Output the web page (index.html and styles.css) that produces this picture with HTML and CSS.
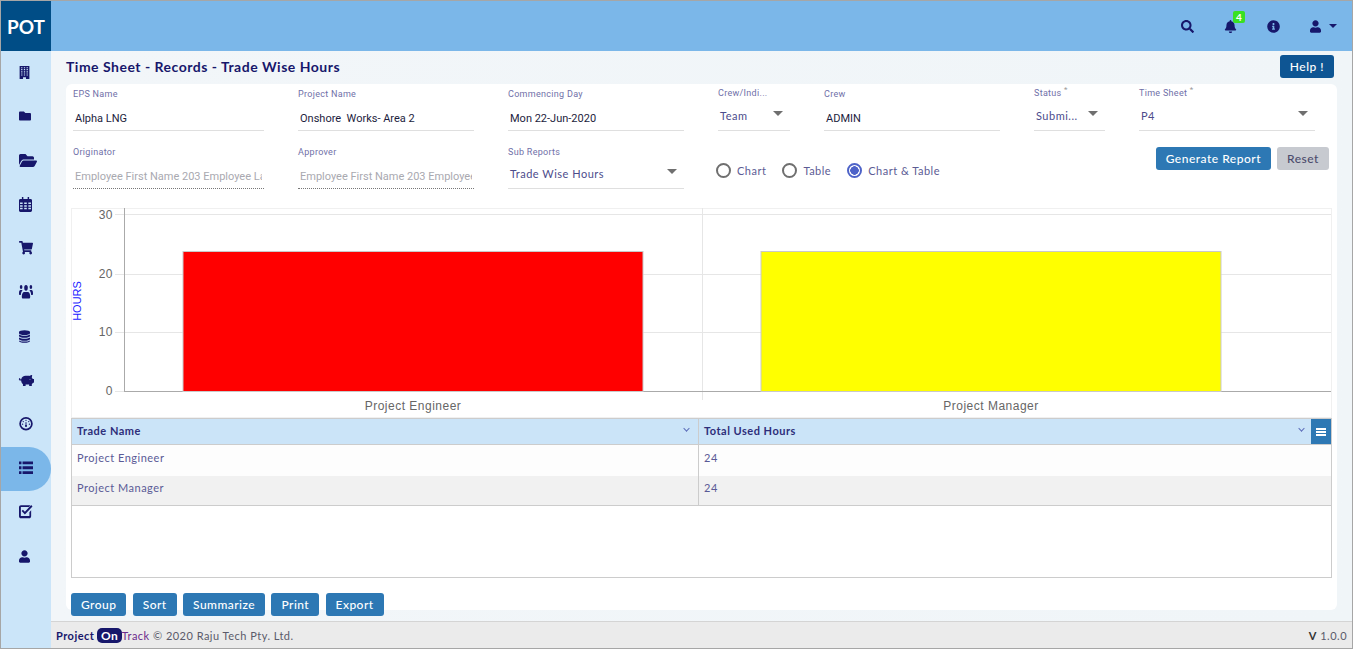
FILE: index.html
```html
<!DOCTYPE html>
<html lang="en">
<head>
    <meta charset="UTF-8">
    <title>Project On Track - Trade Wise Hours</title>
    <link rel="stylesheet" href="styles.css">
</head>
<body>

<div class="app">
    <div class="logo">POT</div>

    <header class="topbar">
        <svg class="top-icon" viewBox="0 0 512 512"><path d="M505 442.7L405.3 343c-4.5-4.5-10.6-7-17-7H372c27.6-35.3 44-79.7 44-128C416 93.1 322.9 0 208 0S0 93.1 0 208s93.1 208 208 208c48.3 0 92.7-16.4 128-44v16.3c0 6.4 2.5 12.5 7 17l99.7 99.7c9.4 9.4 24.6 9.4 33.9 0l28.3-28.3c9.4-9.4 9.4-24.6.1-34zM208 336c-70.7 0-128-57.2-128-128 0-70.7 57.2-128 128-128 70.7 0 128 57.2 128 128 0 70.7-57.2 128-128 128z"/></svg>
        <div class="bell">
            <svg class="top-icon" viewBox="0 0 448 512"><path d="M224 512c35.32 0 63.97-28.65 63.97-64H160.03c0 35.35 28.65 64 63.97 64zm215.39-149.71c-19.32-20.76-55.47-51.99-55.47-154.29 0-77.7-54.48-139.9-127.94-155.16V32c0-17.67-14.32-32-31.98-32s-31.98 14.33-31.98 32v20.84C118.56 68.1 64.08 130.3 64.08 208c0 102.3-36.15 133.53-55.47 154.29-6 6.45-8.66 14.16-8.61 21.71.11 16.4 12.98 32 32.1 32h383.8c19.12 0 32-15.6 32.1-32 .05-7.55-2.61-15.27-8.61-21.71z"/></svg>
            <span class="badge">4</span>
        </div>
        <svg class="top-icon" viewBox="0 0 512 512"><path d="M256 8C119.043 8 8 119.083 8 256c0 136.997 111.043 248 248 248s248-111.003 248-248C504 119.083 392.957 8 256 8zm0 110c23.196 0 42 18.804 42 42s-18.804 42-42 42-42-18.804-42-42 18.804-42 42-42zm56 254c0 6.627-5.373 12-12 12h-88c-6.627 0-12-5.373-12-12v-24c0-6.627 5.373-12 12-12h12v-64h-12c-6.627 0-12-5.373-12-12v-24c0-6.627 5.373-12 12-12h64c6.627 0 12 5.373 12 12v100h12c6.627 0 12 5.373 12 12v24z"/></svg>
        <div class="user-menu">
            <svg class="top-icon user-icon" viewBox="0 0 448 512"><path d="M224 256c70.7 0 128-57.3 128-128S294.7 0 224 0 96 57.3 96 128s57.3 128 128 128zm89.6 32h-16.7c-22.2 10.2-46.9 16-72.9 16s-50.6-5.8-72.9-16h-16.7C60.2 288 0 348.2 0 422.4V464c0 26.5 21.5 48 48 48h352c26.5 0 48-21.5 48-48v-41.6c0-74.2-60.2-134.4-134.4-134.4z"/></svg>
            <span class="user-caret"></span>
        </div>
    </header>

    <nav class="sidebar">
        <a class="nav-item"><svg class="narrow" viewBox="0 0 384 512"><path fill-rule="evenodd" d="M0 0h384v512H250v-70H134v70H0zM60 50v40h50V50zm0 70v40h50v-40zm0 70v40h50v-40zm0 70v40h50v-40zm0 70v40h50v-40zM167 50v40h50V50zm0 70v40h50v-40zm0 70v40h50v-40zm0 70v40h50v-40zm0 70v40h50v-40zM274 50v40h50V50zm0 70v40h50v-40zm0 70v40h50v-40zm0 70v40h50v-40zm0 70v40h50v-40z"/></svg></a>
        <a class="nav-item"><svg class="folder" viewBox="0 64 512 384"><path d="M464 128H272l-64-64H48C21.49 64 0 85.49 0 112v288c0 26.51 21.49 48 48 48h416c26.51 0 48-21.49 48-48V176c0-26.51-21.49-48-48-48z"/></svg></a>
        <a class="nav-item"><svg class="folder-open" viewBox="0 64 576 384" preserveAspectRatio="none"><path d="M572.694 292.093L500.27 416.248A63.997 63.997 0 0 1 444.989 448H45.025c-18.523 0-30.064-20.093-20.731-36.093l72.424-124.155A64 64 0 0 1 152 256h399.964c18.523 0 30.064 20.093 20.73 36.093zM152 224h328v-48c0-26.51-21.49-48-48-48H272l-64-64H48C21.49 64 0 85.49 0 112v278.046l69.077-118.418C86.214 242.25 117.989 224 152 224z"/></svg></a>
        <a class="nav-item"><svg class="calendar" viewBox="0 0 448 512" preserveAspectRatio="none"><path fill-rule="evenodd" d="M100 0h50v64h148V0h50v64h52c26 0 48 22 48 48v352c0 26-22 48-48 48H48c-26 0-48-22-48-48V112c0-26 22-48 48-48h52zM36 190v52h90v-52zm143 0v52h90v-52zm143 0v52h90v-52zM36 280v52h90v-52zm143 0v52h90v-52zm143 0v52h90v-52zM36 370v52h90v-52zm143 0v52h90v-52zm143 0v52h90v-52z"/></svg></a>
        <a class="nav-item"><svg viewBox="0 0 576 512" preserveAspectRatio="none"><path d="M528.12 301.319l47.273-208C578.806 78.301 567.391 64 551.99 64H159.208l-9.166-44.81C147.758 8.021 137.93 0 126.529 0H24C10.745 0 0 10.745 0 24v16c0 13.255 10.745 24 24 24h69.883l70.248 343.435C147.325 417.1 136 435.222 136 456c0 30.928 25.072 56 56 56s56-25.072 56-56c0-15.674-6.447-29.835-16.824-40h209.647C430.447 426.165 424 440.326 424 456c0 30.928 25.072 56 56 56s56-25.072 56-56c0-22.172-12.888-41.332-31.579-50.405l5.517-24.276c3.413-15.018-8.002-29.319-23.403-29.319H218.117l-6.545-32h293.145c11.206 0 20.92-7.754 23.403-18.681z"/></svg></a>
        <a class="nav-item"><svg viewBox="0 60 640 400" preserveAspectRatio="none"><circle cx="96" cy="122" r="60"/><circle cx="544" cy="122" r="60"/><ellipse cx="320" cy="145" rx="82" ry="85"/><path d="M0 300c0-60 30-90 70-90h50c14 0 28 5 40 14-45 28-70 75-76 130H30c-18 0-30-12-30-30zM640 300c0-60-30-90-70-90h-50c-14 0-28 5-40 14 45 28 70 75 76 130h54c18 0 30-12 30-30zM128 400c0-75 50-130 110-130h164c60 0 110 55 110 130v14c0 26-20 46-46 46H174c-26 0-46-20-46-46z"/></svg></a>
        <a class="nav-item"><svg class="narrow" viewBox="0 0 448 512"><path d="M448 73v46C448 159 348 192 224 192S0 159 0 119V73C0 33 100 0 224 0s224 33 224 73zM0 175c48 33 136 49 224 49s176-16 224-49v59c0 40-100 73-224 73S0 274 0 234zM0 295c48 33 136 49 224 49s176-16 224-49v59c0 40-100 73-224 73S0 394 0 354zM0 415c48 33 136 49 224 49s176-16 224-49v24c0 40-100 73-224 73S0 479 0 439z"/></svg></a>
        <a class="nav-item"><svg class="piggy" viewBox="0 40 576 440" preserveAspectRatio="none"><path fill-rule="evenodd" d="M560 224h-29c-9-20-21-38-36-53l17-75c2-10-6-20-16-20-30 0-56 13-74 33-8-1-14-1-22-1H272c-77 0-142 54-156 128H76c-7 0-13-6-12-14 1-6 6-10 12-10h1c3 0 5-2 5-5v-16c0-3-2-5-5-5-23 0-44 16-45 39-2 24 18 49 44 49h38c0 53 22 101 64 133v67c0 9 7 16 16 16h64c9 0 16-7 16-16v-48h128v48c0 9 7 16 16 16h64c9 0 16-7 16-16v-67c18-14 32-31 42-50h28c9 0 16-7 16-16V240c0-9-7-16-16-16zM432 256a16 16 0 1 1 0-32 16 16 0 0 1 0 32z"/></svg></a>
        <a class="nav-item"><svg viewBox="8 8 496 496"><path fill-rule="evenodd" d="M256 8a248 248 0 1 0 0 496 248 248 0 0 0 0-496zm0 64a184 184 0 1 1 0 368 184 184 0 0 1 0-368z"/><circle cx="256" cy="130" r="24"/><circle cx="155" cy="175" r="24"/><circle cx="357" cy="175" r="24"/><circle cx="130" cy="270" r="24"/><circle cx="382" cy="270" r="24"/><circle cx="256" cy="335" r="38"/><path d="M244 335l-8-130h40l-8 130z"/></svg></a>
        <a class="nav-item active"><svg viewBox="0 60 512 392" preserveAspectRatio="none"><path d="M0 72h90v80H0zM0 216h90v80H0zM0 360h90v80H0zM130 72h382v80H130zM130 216h382v80H130zM130 360h382v80H130z"/></svg></a>
        <a class="nav-item"><svg viewBox="0 30 512 470" preserveAspectRatio="none"><path fill-rule="evenodd" d="M72 40h300c14 0 28 4 38 12l-48 48H80c-8 0-12 4-12 12v288c0 8 4 12 12 12h288c8 0 12-4 12-12V280l64-64v206c0 40-32 72-72 72H72c-40 0-72-32-72-72V112c0-40 32-72 72-72z"/><path d="M215 360L95 240l48-48 72 72L445 34l48 48z"/></svg></a>
        <a class="nav-item"><svg class="narrow" viewBox="0 0 448 512"><path d="M224 256c70.7 0 128-57.3 128-128S294.7 0 224 0 96 57.3 96 128s57.3 128 128 128zm89.6 32h-16.7c-22.2 10.2-46.9 16-72.9 16s-50.6-5.8-72.9-16h-16.7C60.2 288 0 348.2 0 422.4V464c0 26.5 21.5 48 48 48h352c26.5 0 48-21.5 48-48v-41.6c0-74.2-60.2-134.4-134.4-134.4z"/></svg></a>
    </nav>

    <main class="main">
        <div class="title-row">
            <h1>Time Sheet - Records - Trade Wise Hours</h1>
            <button class="btn help-btn">Help !</button>
        </div>

        <section class="card">
            <div class="form-row first-row">
                <div class="field w191"><label>EPS Name</label><div class="value">Alpha LNG</div></div>
                <div class="field w176"><label>Project Name</label><div class="value">Onshore&nbsp; Works- Area 2</div></div>
                <div class="field w176"><label>Commencing Day</label><div class="value">Mon 22-Jun-2020</div></div>
                <div class="field w72 raised"><label>Crew/Indi...</label><div class="value select">Team<span class="caret"></span></div></div>
                <div class="field w176"><label>Crew</label><div class="value">ADMIN</div></div>
                <div class="field w71 raised"><label>Status <sup>*</sup></label><div class="value select">Submi...<span class="caret"></span></div></div>
                <div class="field w176 raised"><label>Time Sheet <sup>*</sup></label><div class="value select">P4<span class="caret"></span></div></div>
            </div>

            <div class="form-row second-row">
                <div class="field w191"><label>Originator</label><div class="value disabled">Employee First Name 203 Employee La</div></div>
                <div class="field w176"><label>Approver</label><div class="value disabled">Employee First Name 203 Employee</div></div>
                <div class="field w176"><label>Sub Reports</label><div class="value select">Trade Wise Hours<span class="caret"></span></div></div>
                <div class="radios">
                    <span class="radio"><i></i>Chart</span>
                    <span class="radio"><i></i>Table</span>
                    <span class="radio checked"><i></i>Chart &amp; Table</span>
                </div>
                <div class="form-actions">
                    <button class="btn">Generate Report</button>
                    <button class="btn reset">Reset</button>
                </div>
            </div>

            <svg class="chart" width="1261" height="210" viewBox="0 0 1261 210">
                <rect x="0.5" y="0.5" width="1260" height="209" fill="#fff" stroke="#f0f0f0"/>
                <g stroke="#e6e6e6">
                    <line x1="53" y1="6.5" x2="1260" y2="6.5"/>
                    <line x1="53" y1="66.5" x2="1260" y2="66.5"/>
                    <line x1="53" y1="124.5" x2="1260" y2="124.5"/>
                    <line x1="631.5" y1="0" x2="631.5" y2="192"/>
                    <line x1="44" y1="6.5" x2="53" y2="6.5"/>
                    <line x1="44" y1="66.5" x2="53" y2="66.5"/>
                    <line x1="44" y1="124.5" x2="53" y2="124.5"/>
                    <line x1="44" y1="183.5" x2="53" y2="183.5"/>
                </g>
                <g stroke="#aaa">
                    <line x1="53.5" y1="0" x2="53.5" y2="183"/>
                    <line x1="53" y1="183.5" x2="1260" y2="183.5"/>
                </g>
                <rect x="112" y="43.5" width="460" height="140" fill="#f00" stroke="#c9c9c9"/>
                <rect x="690" y="43.5" width="460" height="140" fill="#ff0" stroke="#c9c9c9"/>
                <g class="chart-axis" text-anchor="end">
                    <text x="42" y="11">30</text>
                    <text x="42" y="70">20</text>
                    <text x="42" y="128">10</text>
                    <text x="42" y="187">0</text>
                </g>
                <g class="chart-axis" text-anchor="middle">
                    <text x="342" y="202">Project Engineer</text>
                    <text x="920" y="202">Project Manager</text>
                </g>
                <text class="chart-title" transform="translate(10 93) rotate(-90)" text-anchor="middle">HOURS</text>
            </svg>

            <div class="grid">
                <div class="grid-head">
                    <div class="col-a">Trade Name<span class="chev"></span></div>
                    <div class="col-b">Total Used Hours<span class="chev"></span></div>
                    <div class="grid-menu"><span></span><span></span><span></span></div>
                </div>
                <div class="grid-row"><div class="col-a">Project Engineer</div><div class="col-b">24</div></div>
                <div class="grid-row alt"><div class="col-a">Project Manager</div><div class="col-b">24</div></div>
            </div>

            <div class="grid-actions">
                <button class="btn">Group</button>
                <button class="btn">Sort</button>
                <button class="btn">Summarize</button>
                <button class="btn">Print</button>
                <button class="btn">Export</button>
            </div>
        </section>
    </main>

    <footer class="footer">
        <div class="brand"><b>Project</b><span class="on-pill">On</span><span class="track">Track</span> &copy; 2020 Raju Tech Pty. Ltd.</div>
        <div class="version"><b>V</b> 1.0.0</div>
    </footer>
</div>

</body>
</html>
```

FILE: styles.css
```css
* { box-sizing: border-box; }
body { margin: 0; font-family: Lato, "Liberation Sans", sans-serif; letter-spacing: 0.5px; color: #4c4c8c; background: #fff; }
button { font-family: inherit; letter-spacing: inherit; white-space: nowrap; }

.app { width: 1353px; height: 649px; border: 1px solid #a6a6a6; display: grid; grid-template-columns: 50px 1fr; grid-template-rows: 50px 1fr 27px; overflow: hidden; }

.logo { background: #004d86; color: #fff; font-size: 19px; font-weight: 700; letter-spacing: 0; display: flex; align-items: center; justify-content: center; }
.topbar { background: #7bb7e9; display: flex; align-items: center; justify-content: flex-end; gap: 30px; padding-right: 15px; }
.top-icon { width: 13px; height: 13px; fill: #17176b; display: block; }
.top-icon.user-icon { width: 11px; }
.bell { position: relative; }
.badge { position: absolute; top: -9px; left: 9px; width: 12px; height: 12px; background: #39e021; color: #fff; border-radius: 2px; font-size: 10px; font-weight: 700; line-height: 12px; text-align: center; letter-spacing: 0; }
.user-menu { display: flex; align-items: center; gap: 8px; }
.user-caret { border-left: 4px solid transparent; border-right: 4px solid transparent; border-top: 4px solid #17176b; }

.sidebar { grid-row: 2 / 4; background: #cbe5f9; }
.nav-item { height: 44px; display: flex; align-items: center; padding: 0 0 2px 18px; }
.nav-item svg { width: 14px; height: 13.5px; fill: #17176b; }
.nav-item svg.narrow { width: 11px; height: 13px; }
.nav-item svg.folder { width: 12px; height: 10px; }
.nav-item svg.folder-open { width: 18px; height: 13px; }
.nav-item svg.calendar { width: 13px; height: 15px; }
.nav-item svg.piggy { width: 16px; height: 12px; margin-left: -1px; }
.nav-item.active { background: #7bb7e9; border-radius: 0 22px 22px 0; }

.main { background: linear-gradient(90deg, #f2f6f9, #f0f5f8); padding: 0 15px; min-width: 0; }
.title-row { height: 33px; display: flex; align-items: center; justify-content: space-between; padding: 0 3px 2px 0; }
h1 { margin: 0; font-size: 14px; font-weight: 700; color: #17176b; }

.btn { height: 23px; border: none; border-radius: 3px; background: #2d78b4; color: #fff; font-size: 12px; font-weight: 500; padding: 0 10px; }
.help-btn { background: #0e5593; width: 54px; padding: 0; }
.btn.reset { background: #c7cad0; color: #4c4c6c; width: 52px; padding: 0; }

.card { background: #fff; border-radius: 6px; height: 526px; padding: 0 5px; }

.form-row { display: flex; gap: 34px; padding-left: 2px; }
.first-row { height: 58px; }
.second-row { height: 66px; }
.field { flex: none; height: 47px; border-bottom: 1px solid #dfdfdf; }
.w191 { width: 191px; }
.w176 { width: 176px; }
.w72 { width: 72px; }
.w71 { width: 71px; }
.field label { display: block; padding-top: 5px; font-family: Roboto, sans-serif; font-size: 9px; letter-spacing: 0.3px; line-height: 11px; color: #7070a8; white-space: nowrap; }
.field sup { font-size: 8px; line-height: 0; color: #999; }
.raised label { padding-top: 4px; }
.value { margin-top: 12px; padding: 0 2px; font-family: Roboto, sans-serif; font-size: 11px; letter-spacing: 0; line-height: 14px; color: #1d1d3d; white-space: nowrap; overflow: hidden; }
.value.select { font-family: Lato, sans-serif; letter-spacing: 0.5px; color: #4c4c8c; position: relative; overflow: visible; margin-top: 9px; }
.raised .value.select { margin-top: 10px; }
.caret { position: absolute; right: 7px; top: 2px; border-left: 5px solid transparent; border-right: 5px solid transparent; border-top: 5px solid #6f6f6f; }
.value.disabled { color: #a9a9b0; margin-right: 2px; }
.second-row .field:has(.disabled) { border-bottom: 1px dotted #777; }

.radios { flex: none; margin-left: -2px; display: flex; gap: 16px; padding-top: 21px; font-size: 11px; height: 47px; }
.radio { display: inline-flex; align-items: center; gap: 6px; height: 14px; color: #5c5c94; }
.radio i { width: 15px; height: 15px; border: 2px solid #6f6f6f; border-radius: 50%; display: block; }
.radio.checked i { border-color: #4e63c8; background: radial-gradient(circle, #4e63c8 0 4px, #fff 4.5px); }
.form-actions { margin-left: auto; display: flex; gap: 6px; padding-top: 5px; padding-right: 3px; height: 28px; }

.chart { display: block; }
.chart-axis text { font-family: "Liberation Sans", sans-serif; font-size: 12px; fill: #666; letter-spacing: 0.5px; }
.chart-title { font-family: "Liberation Sans", sans-serif; font-size: 11px; fill: #1a1aff; letter-spacing: 0; }

.grid { height: 160px; border: 1px solid #ccc; font-size: 11px; }
.grid-head { display: flex; height: 26px; background: #cbe4f8; border-bottom: 1px solid #ccc; font-weight: 700; color: #2e2e7a; position: relative; }
.grid-row { display: flex; height: 31px; padding-right: 5px; background: #fdfdfd; line-height: 26px; color: #5a5a96; }
.grid-row.alt { background: #f1f1f1; height: 30px; line-height: 24px; border-bottom: 1px solid #ccc; }
.col-a { width: 627px; padding-left: 5px; border-right: 1px solid #ccc; position: relative; }
.col-b { flex: 1; padding-left: 5px; position: relative; }
.grid-head .col-a, .grid-head .col-b { line-height: 24px; }
.chev { position: absolute; top: 7px; right: 9px; width: 5px; height: 5px; border-right: 1px solid #5a6ab8; border-bottom: 1px solid #5a6ab8; transform: rotate(45deg) scale(0.9); }
.grid-head .col-b .chev { right: 27px; }
.grid-menu { position: absolute; right: 0; top: 0; width: 20px; height: 25px; background: #2d78b4; display: flex; flex-direction: column; align-items: center; justify-content: center; gap: 1px; }
.grid-menu span { width: 10px; height: 2px; background: #fff; }

.grid-actions { display: flex; gap: 6.4px; margin-top: 15px; letter-spacing: 0.45px; }

.footer { grid-column: 2; background: #ebebeb; border-top: 1px solid #d4d4d4; display: flex; align-items: center; justify-content: space-between; padding: 0 5px; font-size: 11px; letter-spacing: 0.48px; color: #5a5a6a; }
.brand b { color: #17176b; }
.on-pill { display: inline-block; background: #17176b; color: #fff; font-size: 12px; font-weight: 700; border-radius: 5px; padding: 0 3.5px; margin-left: 3px; line-height: 15px; }
.track { color: #6c2a8c; }
.version b { color: #333; }
```
